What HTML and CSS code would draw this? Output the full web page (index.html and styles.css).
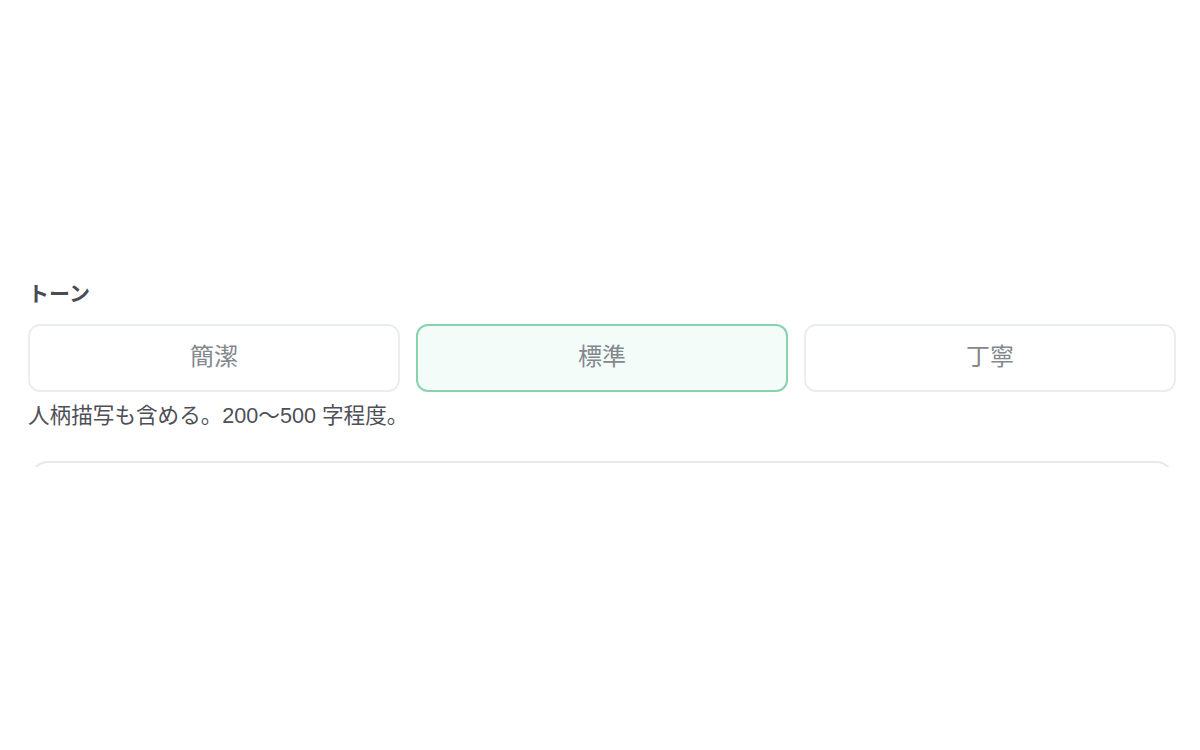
FILE: index.html
```html
<!DOCTYPE html>
<html lang="ja">
<head>
<meta charset="utf-8">
<title>トーン</title>
<link rel="stylesheet" href="styles.css">
</head>
<body>
<main class="page">
  <section class="field">
    <h2 class="field-label">トーン</h2>
    <div class="options">
      <button class="option" type="button">簡潔</button>
      <button class="option option--active" type="button">標準</button>
      <button class="option" type="button">丁寧</button>
    </div>
    <p class="hint">人柄描写も含める。200〜500 字程度。</p>
    <div class="next-clip">
      <div class="next-box"></div>
    </div>
  </section>
</main>
</body>
</html>
```

FILE: styles.css
```css
html, body {
  margin: 0;
  padding: 0;
  background: #ffffff;
}

body {
  font-family: "Liberation Sans", "Noto Sans CJK JP", sans-serif;
  color: #4b4d55;
}

.page {
  padding: 280px 24px 0 28px;
}

.field {
  display: flex;
  flex-direction: column;
}

.field-label {
  margin: 0;
  font-size: 21px;
  line-height: 28px;
  font-weight: 700;
  color: #4a4c54;
}

.options {
  margin-top: 16px;
  display: grid;
  grid-template-columns: repeat(3, 1fr);
  gap: 16px;
}

.option {
  height: 68px;
  border: 2px solid #e9eeee;
  border-radius: 12px;
  background: #ffffff;
  font-family: "Liberation Sans", "Noto Sans CJK JP", sans-serif;
  font-size: 24px;
  line-height: 30px;
  color: #83888d;
  cursor: pointer;
  padding: 0 0 2px;
}

.option--active {
  border-color: #88d3ad;
  background: #f3fcf8;
}

.hint {
  margin: 10px 0 0;
  font-size: 21.6px;
  line-height: 28px;
  color: #4e5057;
}

.next-clip {
  margin-top: 31px;
  height: 6px;
  overflow: hidden;
}

.next-box {
  height: 80px;
  border: 2px solid #e6eaea;
  border-radius: 18px;
  margin: 0 2px;
}
```
